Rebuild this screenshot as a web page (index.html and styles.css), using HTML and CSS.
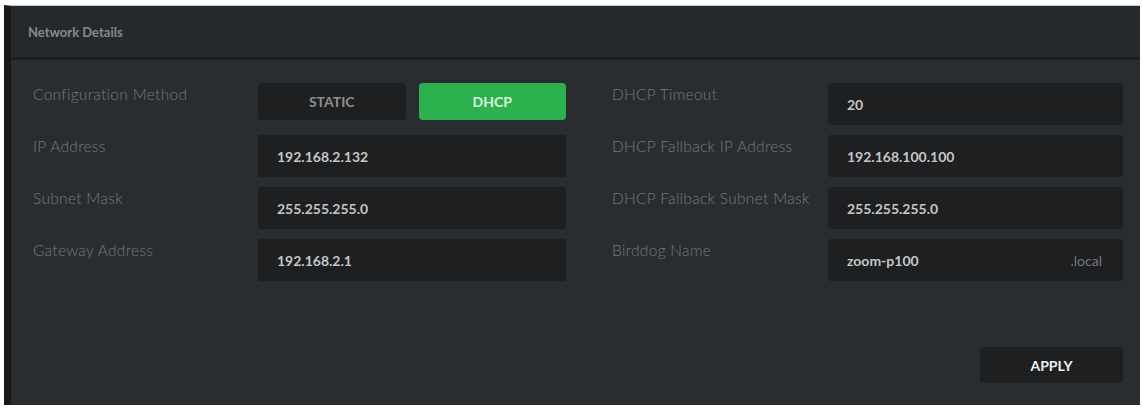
FILE: index.html
```html
<!DOCTYPE html>
<html>
	<head>
		<meta charset='utf-8'>
		<meta name='viewport' content='width=device-width, initial-scale=1'>
		<title>Network Details</title>
		<link rel="stylesheet" href="styles.css">
	</head>
	<body>
		<div class='panel'>
			<header class='panel-head'>
				<h1>Network Details</h1>
			</header>
			<main class='panel-body'>
				<div class='columns'>
					<div class='col col-left'>
						<label>Configuration Method</label>
						<div class='toggle'>
							<button class='opt'>STATIC</button>
							<button class='opt green'>DHCP</button>
						</div>
						<label>IP Address</label>
						<div class='field'><span>192.168.2.132</span></div>
						<label>Subnet Mask</label>
						<div class='field'><span>255.255.255.0</span></div>
						<label>Gateway Address</label>
						<div class='field'><span>192.168.2.1</span></div>
					</div>
					<div class='col col-right'>
						<label>DHCP Timeout</label>
						<div class='field'><span>20</span></div>
						<label>DHCP Fallback IP Address</label>
						<div class='field'><span>192.168.100.100</span></div>
						<label>DHCP Fallback Subnet Mask</label>
						<div class='field'><span>255.255.255.0</span></div>
						<label>Birddog Name</label>
						<div class='field'><span>zoom-p100</span><span class='suffix'>.local</span></div>
					</div>
				</div>
				<div class='actions'>
					<button class='apply'>APPLY</button>
				</div>
			</main>
		</div>
	</body>
</html>
```

FILE: styles.css
```css
:root {
	--page: rgb(255, 255, 255);
	--panel: rgb(42, 45, 48);
	--head: rgb(38, 41, 44);
	--edge: rgb(22, 24, 25);
	--well: rgb(29, 31, 33);
	--label: rgb(118, 121, 124);
	--value: rgb(196, 198, 200);
	--green: rgb(43, 178, 76);
}
html {
	background-color: var(--page);
	font-family: "Lato","Open Sans",sans-serif;
}
body {
	margin: 0;
	padding: 5px 3px 4px 4px;
}
.panel {
	background-color: var(--panel);
	border-left: 7px solid var(--edge);
	border-top: 1px solid rgb(200, 200, 200);
	height: 399px;
	display: flex;
	flex-direction: column;
}
.panel-head {
	background-color: var(--head);
	height: 51px;
	border-bottom: 3px solid rgb(28, 30, 32);
	display: flex;
	align-items: center;
	padding-left: 17px;
}
h1 {
	margin: 0;
	font-size: 13px;
	font-weight: 700;
	color: rgb(135, 138, 141);
}
.panel-body {
	flex: 1;
	padding: 23px 17px 22px 22px;
	display: flex;
	flex-direction: column;
}
.columns {
	display: flex;
	gap: 46px;
}
.col {
	display: grid;
	grid-auto-rows: 42px;
	row-gap: 10px;
}
.col-left {
	grid-template-columns: 225px 308px;
}
.col-right {
	grid-template-columns: 216px 295px;
}
label {
	font-size: 15.5px;
	font-weight: 300;
	letter-spacing: 0.3px;
	color: var(--label);
	padding-top: 2px;
	white-space: nowrap;
}
.toggle {
	display: flex;
	gap: 13px;
	height: 37px;
}
button {
	font-family: "Lato","Open Sans",sans-serif;
	font-size: 14px;
	font-weight: 700;
	border: 0;
	border-radius: 4px;
	cursor: pointer;
}
.opt {
	flex: 1;
	background-color: var(--well);
	color: rgb(140, 143, 146);
}
.green {
	background-color: var(--green);
	color: rgb(222, 245, 226);
}
.field {
	background-color: var(--well);
	border-radius: 3px;
	display: flex;
	align-items: center;
	justify-content: space-between;
	padding: 0 21px 0 19px;
	font-size: 14px;
	font-weight: 700;
	color: var(--value);
}
.suffix {
	font-weight: 400;
	color: var(--label);
}
.actions {
	margin-top: auto;
	display: flex;
	justify-content: flex-end;
}
.apply {
	width: 143px;
	height: 36px;
	background-color: var(--well);
	color: rgb(240, 240, 240);
}
```
